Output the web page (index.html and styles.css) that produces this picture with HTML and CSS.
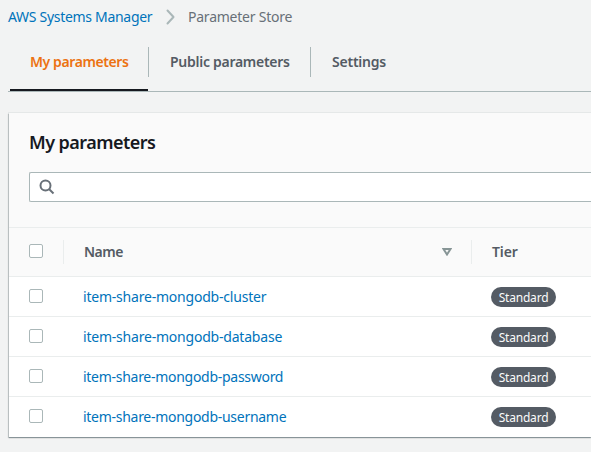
FILE: index.html
```html
<!DOCTYPE html>
<html lang="en">
<head>
<meta charset="utf-8">
<title>Parameter Store</title>
<link rel="stylesheet" href="styles.css">
</head>
<body>
<nav class="crumbs">
  <a class="crumb-link">AWS Systems Manager</a>
  <svg class="chevron" width="10" height="16" viewBox="0 0 10 16"><path d="M1.500 1.500 7.500 8l-6 6.500" fill="none" stroke="#aab7b8" stroke-width="2" stroke-linecap="round" stroke-linejoin="round"/></svg>
  <span class="crumb-current">Parameter Store</span>
</nav>
<div class="tabs">
  <div class="tab active">My parameters</div>
  <div class="tab public">Public parameters</div>
  <div class="tab">Settings</div>
</div>
<main class="panel">
  <header class="panel-head">
    <h2>My parameters</h2>
    <div class="search">
      <svg width="16" height="16" viewBox="0 0 16 16" fill="none" stroke="#687078" stroke-width="2"><circle cx="6.500" cy="6.500" r="5"/><path d="m10 10 4.500 4.500"/></svg>
    </div>
  </header>
  <div class="row columns">
    <div class="check"><i class="box"></i></div>
    <div class="name-head"><span>Name</span>
      <svg width="10" height="8" viewBox="0 0 10 8"><path d="M1.500 1h7L5 6.500z" fill="none" stroke="#879596" stroke-width="2"/></svg>
    </div>
    <div class="tier-head"><span>Tier</span></div>
  </div>
  <div class="row"><div class="check"><i class="box"></i></div><div class="name"><a>item-share-mongodb-cluster</a></div><div class="tier"><span class="badge">Standard</span></div></div>
  <div class="row"><div class="check"><i class="box"></i></div><div class="name"><a>item-share-mongodb-database</a></div><div class="tier"><span class="badge">Standard</span></div></div>
  <div class="row"><div class="check"><i class="box"></i></div><div class="name"><a class="tight">item-share-mongodb-password</a></div><div class="tier"><span class="badge">Standard</span></div></div>
  <div class="row"><div class="check"><i class="box"></i></div><div class="name"><a class="tight">item-share-mongodb-username</a></div><div class="tier"><span class="badge">Standard</span></div></div>
</main>
</body>
</html>
```
FILE: styles.css
```css
* { box-sizing: border-box; }
body {
  margin: 0;
  height: 452px;
  overflow: hidden;
  background: #f2f3f3;
  color: #545b64;
  font: 14px/20px "Noto Sans", sans-serif;
  white-space: nowrap;
}
.crumbs { display: flex; align-items: center; height: 34px; padding-left: 8px; }
.crumb-link { width: 145px; color: #0073bb; letter-spacing: -0.3px; }
.chevron { margin: 0 12px 0 13px; }
.crumb-current { color: #687078; letter-spacing: -0.23px; }
.tabs {
  display: flex;
  height: 58px;
  margin-left: 8px;
  padding: 13px 0 0 2px;
  border-bottom: 1px solid #aab7b8;
  font-weight: 600;
  letter-spacing: -0.23px;
}
.tab { height: 30px; padding: 5px 0 0 21px; }
.active { width: 138px; height: 44px; padding-left: 20px; border-bottom: 2px solid #16191f; color: #ec7211; letter-spacing: -0.4px; }
.public { width: 163px; border: solid #aab7b8; border-width: 0 1px; letter-spacing: -0.27px; }
.panel {
  width: 582px;
  height: 324px;
  margin: 21px 0 0 9px;
  background: #fff;
  box-shadow: 0 1px 1px 0 rgba(0, 28, 36, .3), -1px 1px 1px 0 rgba(0, 28, 36, .15), 0 0 0 1px #e5e8e8;
}
.panel-head { height: 115px; padding: 18px 0 0 20px; background: #fafafa; border-bottom: 1px solid #eaeded; }
h2 { height: 22px; margin: 0 0 19px; color: #16191f; font-size: 18px; line-height: 22px; font-weight: 600; letter-spacing: -0.55px; }
.search { display: flex; align-items: center; height: 30px; padding-left: 9px; border: 1px solid #aab7b8; border-right: 0; border-radius: 2px 0 0 2px; background: #fff; }
.row { display: grid; grid-template-columns: 54px 408px 1fr; height: 40px; border-bottom: 1px solid #eaeded; }
.row:last-child { border-bottom: 0; }
.columns { height: 49px; align-items: center; background: #fafafa; font-weight: 600; letter-spacing: -0.5px; }
.check { padding: 12px 0 0 20px; }
.columns .check { height: 24px; padding-top: 4px; }
.box { display: block; width: 14px; height: 14px; border: 1px solid #aab7b8; border-radius: 2px; background: #fff; }
.name-head, .tier-head { display: flex; align-items: center; height: 24px; padding-left: 20px; border-left: 1px solid #eaeded; }
.name-head { justify-content: space-between; padding-right: 19px; }
.tier-head { letter-spacing: -0.1px; }
.name { padding: 10px 0 0 20px; color: #0073bb; letter-spacing: -0.21px; }
.tight { letter-spacing: -0.28px; }
.tier { padding: 10px 0 0 20px; }
.badge { display: block; width: 65px; height: 20px; border-radius: 10px; background: #545b64; color: #fafafa; text-align: center; font-size: 12px; line-height: 21px; letter-spacing: -0.2px; }
```
